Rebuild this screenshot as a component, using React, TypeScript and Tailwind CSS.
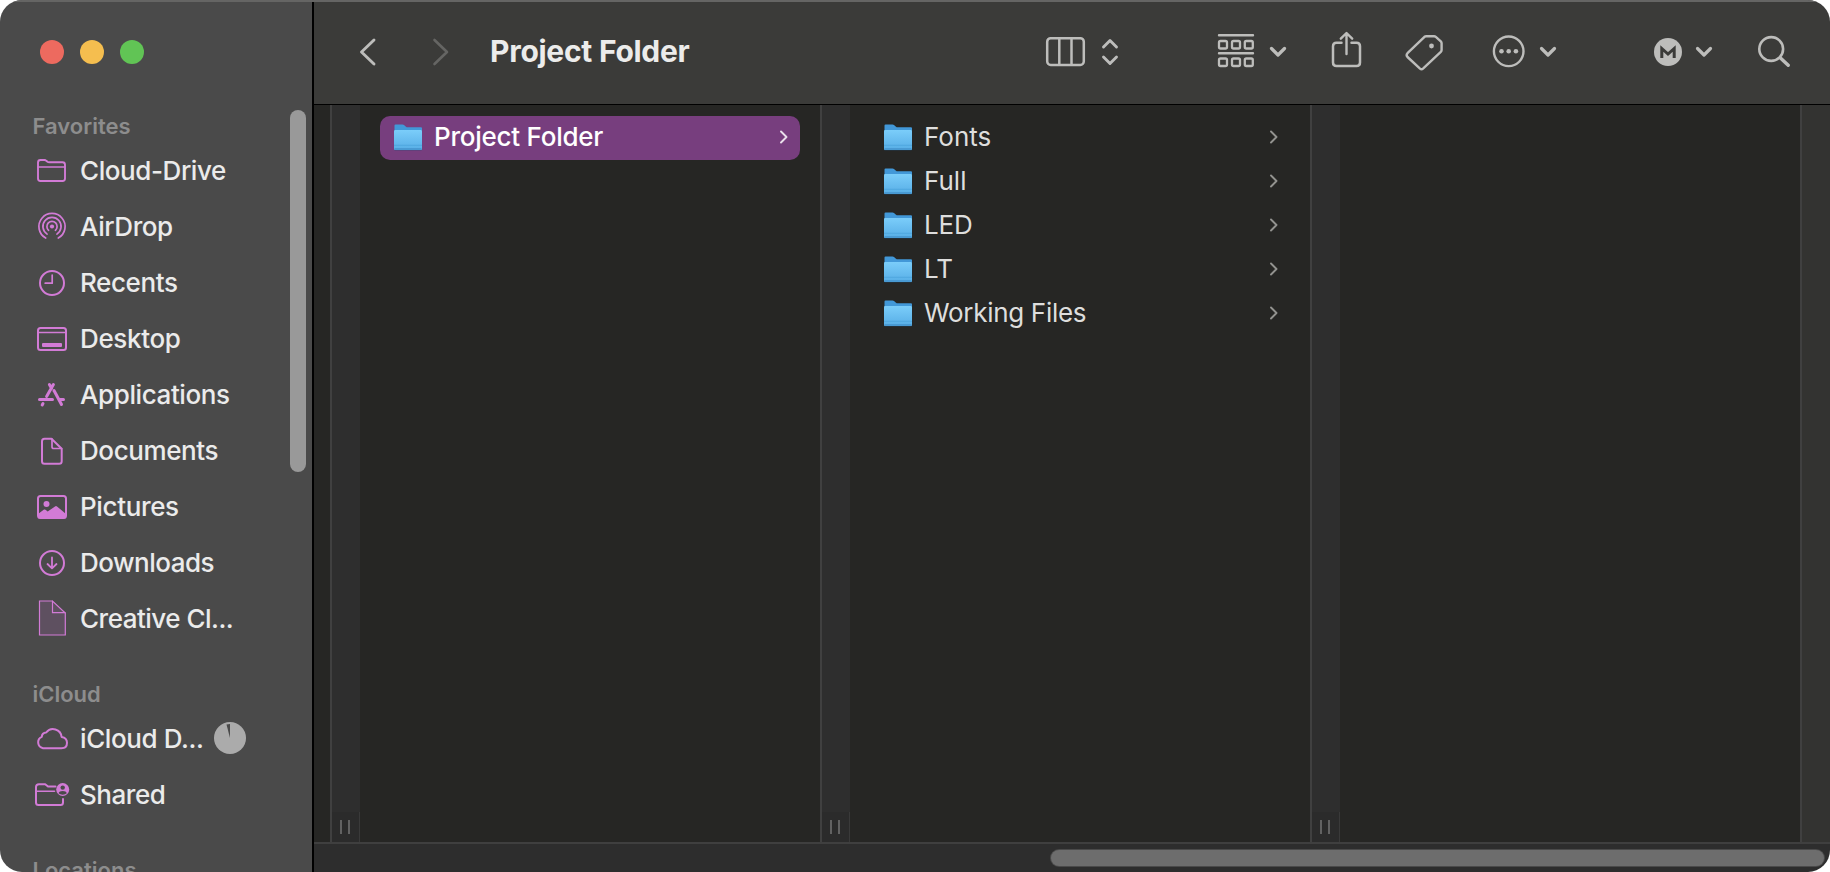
import type { ReactNode } from "react";

type GlyphProps = { box: string; w: number; h: number; className?: string; children: ReactNode };

function Glyph({ box, w, h, className = "", children }: GlyphProps) {
  return (
    <svg
      viewBox={box}
      width={w}
      height={h}
      fill="none"
      stroke="currentColor"
      strokeWidth={2}
      strokeLinecap="round"
      strokeLinejoin="round"
      className={`block shrink-0 ${className}`}
    >
      {children}
    </svg>
  );
}

/* Sidebar glyphs share a 40x40 box centred on (20, 20). */
function SideGlyph({ children }: { children: ReactNode }) {
  return (
    <Glyph box="0 0 40 40" w={40} h={40} className="text-[#d27bd6]">
      {children}
    </Glyph>
  );
}

const glyphs: Record<string, ReactNode> = {
  folder: (
    <>
      <path d="M6 28.5V12.5Q6 10 8.5 10H12.5Q13.5 10 14.3 10.8L15.5 11.8Q16.2 12.3 17.2 12.3H30.5Q33 12.3 33 14.8V28.5Q33 31 30.5 31H8.500Q6 31 6 28.5Z" strokeWidth={1.9} />
      <path d="M6 17H33" strokeWidth={1.6} />
    </>
  ),
  airdrop: (
    <>
      <circle cx="20" cy="20.500" r="2.100" fill="currentColor" stroke="none" />
      <path d="M16.600 24.300A5.100 5.100 0 1 1 23.400 24.300" strokeWidth={1.7} />
      <path d="M15.100 28.100A9.100 9.100 0 1 1 24.900 28.100" strokeWidth={1.7} />
      <path d="M13.700 32.000A13.100 13.100 0 1 1 26.300 32.000" strokeWidth={1.7} />
    </>
  ),
  recents: (
    <>
      <circle cx="20" cy="21" r="12" strokeWidth={2} />
      <path d="M20.200 13V21.200H13.200" strokeWidth={1.7} />
    </>
  ),
  desktop: (
    <>
      <rect x="6" y="10" width="28" height="22" rx="2.500" strokeWidth={2} />
      <path d="M6 14.500H34" strokeWidth={1.500} />
      <rect x="10" y="25" width="20" height="4" rx="1" fill="currentColor" stroke="none" />
    </>
  ),
  applications: (
    <g strokeWidth={3}>
      <path d="M17.400 10.500L19.600 14.500M21.400 10.500L14.600 22.500" />
      <path d="M7.500 25.500H20.500M27.500 25.500H31.500" />
      <path d="M22 16.500L29.500 30.500" />
      <path d="M11 29.500L10.200 31" />
    </g>
  ),
  documents: (
    <>
      <path d="M12.500 8.700H19.500L29.700 18.800V31.300Q29.700 33.800 27.200 33.800H12.500Q10 33.800 10 31.300V11.200Q10 8.700 12.500 8.700Z" strokeWidth={2} />
      <path d="M20 9V16.700Q20 18.500 21.800 18.500H29.500" strokeWidth={1.7} />
    </>
  ),
  pictures: (
    <>
      <rect x="6" y="10" width="28" height="22" rx="2.500" strokeWidth={2} />
      <circle cx="14.500" cy="18" r="3" fill="currentColor" stroke="none" />
      <path d="M6 28L12 23.600Q12.800 23.100 13.500 23.800L15.700 25.600L23 20.400Q24 19.700 25 20.400L34 28V31Q34 32.500 32 32.500H8Q6 32.500 6 31Z" fill="currentColor" stroke="none" />
    </>
  ),
  downloads: (
    <>
      <circle cx="20" cy="21" r="12" strokeWidth={2} />
      <path d="M20 15.500V26M15.500 22L20 26.300L24.500 22" strokeWidth={1.8} />
    </>
  ),
  creative: (
    <g strokeWidth={1.2} strokeLinejoin="miter">
      <path d="M7.500 3H20.500L33.300 15V37H7.500Z" fill="#5e5060" />
      <path d="M20.500 3V14.700H33" />
    </g>
  ),
  cloud: (
    <path
      d="M11 30.200A6 6 0 0 1 9.800 18.800Q10 14.700 14.200 14.500A8.600 8.600 0 0 1 29.600 19Q35 20 35 24.700Q35 30.200 29.500 30.200Z"
      strokeWidth={2}
    />
  ),
  shared: (
    <>
      <path d="M23.500 12.500H16L13.200 10.200H7Q4 10.200 4 13V28.500Q4 31 6.500 31H28.500Q31 31 31 28.500V25" strokeWidth={2} />
      <path d="M4.500 17.300H22.500" strokeWidth={1.6} />
      <circle cx="30.700" cy="15.500" r="6.500" fill="currentColor" stroke="none" />
      <circle cx="30.700" cy="13.600" r="2.200" fill="#4a4a4a" stroke="none" />
      <path d="M26.600 19.300Q27.300 16.900 30.700 16.900T34.800 19.300Q33.200 20.700 30.700 20.700T26.600 19.300Z" fill="#4a4a4a" stroke="none" />
    </>
  ),
};

const favorites = [
  { icon: "folder", label: "Cloud-Drive", tracking: "tracking-[-0.42px]" },
  { icon: "airdrop", label: "AirDrop", tracking: "tracking-[-0.42px]" },
  { icon: "recents", label: "Recents", tracking: "tracking-[-0.4px]" },
  { icon: "desktop", label: "Desktop", tracking: "tracking-[-0.35px]" },
  { icon: "applications", label: "Applications", tracking: "tracking-[-0.4px]" },
  { icon: "documents", label: "Documents", tracking: "tracking-[-0.4px]" },
  { icon: "pictures", label: "Pictures", tracking: "tracking-[-0.35px]" },
  { icon: "downloads", label: "Downloads", tracking: "tracking-[-0.5px]" },
  { icon: "creative", label: "Creative Cl...", tracking: "tracking-[-0.5px]" },
];

const folders = [
  { label: "Fonts", tracking: "tracking-[0px]" },
  { label: "Full", tracking: "tracking-[0px]" },
  { label: "LED", tracking: "tracking-[-0.2px]" },
  { label: "LT", tracking: "tracking-[0px]" },
  { label: "Working Files", tracking: "tracking-[-0.3px]" },
];

function SideItem({ icon, label, tracking, children }: { icon: string; label: string; tracking: string; children?: ReactNode }) {
  return (
    <li className="flex h-14 items-center pl-8">
      <SideGlyph>{glyphs[icon]}</SideGlyph>
      <span className={`ml-2 whitespace-nowrap pt-[2px] text-[26px] leading-none font-medium text-[#ebebeb] ${tracking}`}>{label}</span>
      {children}
    </li>
  );
}

function SideHeading({ children }: { children: ReactNode }) {
  return <h2 className="flex h-8 items-center pl-[32.5px] text-[22px] leading-none font-semibold text-[#8d8d8d]">{children}</h2>;
}

function FolderIcon() {
  return (
    <svg viewBox="0 0 28 28" width="28" height="28" className="block shrink-0">
      <defs>
        <linearGradient id="face" x1="0" y1="0" x2="0" y2="1">
          <stop offset="0" stopColor="#7bcdfa" />
          <stop offset="1" stopColor="#57aee6" />
        </linearGradient>
      </defs>
      <path d="M0.500 4V1.500Q0.500 0.500 1.500 0.500H8.500Q9.500 0.500 10.300 1.200L12 2.700Q12.700 3.200 13.500 3.200H27Q28 3.200 28 4.200V10H0.500Z" fill="#4298d8" />
      <path d="M0 7.200Q0 6 1 6H27Q28 6 28 7.200V25.500Q28 26.500 27 26.500H1Q0 26.500 0 25.500Z" fill="#1d4d75" opacity="0.500" />
      <path d="M0 7.200Q0 6 1 6H27Q28 6 28 7.200V25Q28 26 27 26H1Q0 26 0 25Z" fill="url(#face)" />
      <path d="M0 21.300H28" stroke="#4da3dc" strokeWidth="0.800" />
      <path d="M0.500 25H27.500" stroke="#4291cb" strokeWidth="1.400" />
    </svg>
  );
}

function FolderRow({ label, tracking, selected = false }: { label: string; tracking: string; selected?: boolean }) {
  return (
    <li className={`flex h-11 items-center rounded-[10px] pr-[11px] pl-[14px] ${selected ? "bg-[#773e7e] text-white" : "text-[#dededd]"}`}>
      <FolderIcon />
      <span className={`ml-3 flex-1 whitespace-nowrap pb-[2px] text-[26px] leading-none ${selected ? "font-medium" : "font-normal"} ${tracking}`}>{label}</span>
      <Glyph box="0 0 10 16" w={10} h={16} className={`mb-[2px] ${selected ? "text-[#eadfeb]" : "text-[#92928f]"}`}>
        <path d="M2 2.500L7.500 8L2 13.500" strokeWidth={1.9} />
      </Glyph>
    </li>
  );
}

function Gutter() {
  return (
    <div className="flex w-[30px] shrink-0 flex-col justify-end border-l-2 border-[#404040] bg-[#2e2e2e]">
      <div className="flex h-[30px] gap-[6px] border-r border-[#3a3a3a] bg-[#2b2b2b] pt-2 pl-2">
        <span className="h-[14px] w-[2px] bg-[#626262]" />
        <span className="h-[14px] w-[2px] bg-[#626262]" />
      </div>
    </div>
  );
}

function DownChevron({ className }: { className: string }) {
  return (
    <Glyph box="0 0 18 12" w={18} h={12} className={className}>
      <path d="M2.500 2.500L9 9L15.500 2.500" strokeWidth={3.200} />
    </Glyph>
  );
}

function Toolbar() {
  return (
    <header className="flex h-[104px] shrink-0 items-center bg-[#3b3b39] text-[#bdbdbb]">
      <Glyph box="0 0 18 30" w={18} h={30} className="ml-[45px]">
        <path d="M15 3L2.500 15L15 27" strokeWidth={2.900} />
      </Glyph>
      <Glyph box="0 0 18 30" w={18} h={30} className="ml-[55px] text-[#656563]">
        <path d="M2.500 3L15 15L2.500 27" strokeWidth={2.600} />
      </Glyph>
      <h1 className="ml-10 w-[239px] whitespace-nowrap pb-[2px] text-[30px] leading-none font-bold tracking-[-0.27px] text-[#ececeb]">Project Folder</h1>
      <Glyph box="1044 34 44 36" w={44} h={36} className="ml-[315px]">
        <rect x="1047.200" y="38.200" width="36.600" height="26.800" rx="3.500" strokeWidth={2.500} />
        <path d="M1059.300 38.500V64.500M1071.500 38.500V64.500" strokeWidth={2.500} />
      </Glyph>
      <Glyph box="1100 34 20 36" w={20} h={36} className="ml-[12px]">
        <path d="M1103.500 47L1110 40.500L1116.500 47M1103.500 57L1110 63.500L1116.500 57" strokeWidth={2.900} />
      </Glyph>
      <Glyph box="1216 32 40 40" w={40} h={40} className="ml-[96px]">
        <path d="M1219 35.300H1253M1219 53.200H1253" strokeWidth={2.400} />
        {[1219, 1232, 1244.800].map((x) => (
          <g key={x} strokeWidth={2.300}>
            <rect x={x} y="41" width="8" height="7.500" rx="1.500" />
            <rect x={x} y="58.500" width="8" height="7.500" rx="1.500" />
          </g>
        ))}
      </Glyph>
      <DownChevron className="ml-[13px]" />
      <Glyph box="1330 30 34 44" w={34} h={44} className="ml-[43px]">
        <path d="M1341.500 42.700H1336.500Q1333 42.700 1333 46.200V62.500Q1333 66 1336.500 66H1356.500Q1360 66 1360 62.500V46.200Q1360 42.700 1356.500 42.700H1351.500" strokeWidth={2.500} />
        <path d="M1346.500 54V33.500M1340.800 38.700L1346.500 33L1352.200 38.700" strokeWidth={2.400} />
      </Glyph>
      <Glyph box="1404 32 42 40" w={42} h={40} className="ml-[40px]">
        <path d="M1407.500 53.200L1424.500 36.800Q1425.300 36.200 1426.300 36.200H1434Q1435 36.200 1435.800 36.900L1440.800 41.400Q1441.600 42.200 1441.600 43.200V50Q1441.600 51 1440.800 51.800L1423 68.600Q1421.500 69.900 1420 68.600L1407.500 57Q1405.800 55 1407.500 53.200Z" strokeWidth={2.400} />
        <circle cx="1431.500" cy="46" r="2.400" fill="currentColor" stroke="none" />
      </Glyph>
      <Glyph box="1490 34 36 36" w={36} h={36} className="ml-[44px]">
        <circle cx="1508.700" cy="51.300" r="14.800" strokeWidth={2.400} />
        <g fill="currentColor" stroke="none">
          <circle cx="1501.500" cy="51.300" r="2.300" />
          <circle cx="1508.700" cy="51.300" r="2.300" />
          <circle cx="1515.900" cy="51.300" r="2.300" />
        </g>
      </Glyph>
      <DownChevron className="ml-[13px]" />
      <span className="ml-[97px] flex size-7 items-center justify-center rounded-full bg-[#bdbdbb] text-[#3b3b39]">
        <Glyph box="0 0 28 28" w={28} h={28}>
          <path d="M7.800 20V10.500L14 16L20.200 10.500V20" strokeWidth={3} strokeLinecap="butt" strokeLinejoin="miter" />
        </Glyph>
      </span>
      <DownChevron className="ml-[13px]" />
      <Glyph box="1756 34 36 36" w={36} h={36} className="ml-[43px]">
        <circle cx="1771.200" cy="49" r="11.900" strokeWidth={2.600} />
        <path d="M1780.200 57.800L1788.200 65.300" strokeWidth={3.400} />
      </Glyph>
    </header>
  );
}

export default function App() {
  return (
    <div className="h-[872px] w-[1830px] overflow-hidden bg-white font-['Inter','Liberation_Sans',sans-serif]">
      <div className="relative flex h-full overflow-hidden rounded-[22px]">
        <div className="absolute inset-x-0 top-0 z-10 h-[2px] bg-[#656564]" />
        <aside className="relative h-full w-[312px] shrink-0 overflow-hidden bg-[#4a4a4a]">
          <div className="flex gap-4 pt-10 pl-10">
            <span className="size-6 rounded-full bg-[#ed6a5f]" />
            <span className="size-6 rounded-full bg-[#f5be4f]" />
            <span className="size-6 rounded-full bg-[#61c455]" />
          </div>
          <nav className="pt-[46px]">
            <SideHeading>Favorites</SideHeading>
            <ul>
              {favorites.map((item) => (
                <SideItem key={item.label} {...item} />
              ))}
            </ul>
            <div className="mt-8">
              <SideHeading>iCloud</SideHeading>
            </div>
            <ul>
              <SideItem icon="cloud" label="iCloud D..." tracking="tracking-[-0.4px]">
                <svg viewBox="0 0 32 32" width="32" height="32" className="absolute left-[214px] block">
                  <circle cx="16" cy="16" r="16" fill="#ababab" />
                  <path d="M16 16L12.500 2.600Q14.200 2 16 2Z" fill="#4a4a4a" />
                </svg>
              </SideItem>
              <SideItem icon="shared" label="Shared" tracking="tracking-[-0.45px]" />
            </ul>
            <div className="mt-8">
              <SideHeading>Locations</SideHeading>
            </div>
          </nav>
          <div className="absolute top-[110px] right-[6px] h-[362px] w-4 rounded-full bg-[#999999]" />
        </aside>
        <div className="w-[2px] shrink-0 bg-black" />
        <main className="flex min-w-0 flex-1 flex-col">
          <Toolbar />
          <div className="h-px shrink-0 bg-black" />
          <div className="flex h-[737px] shrink-0 overflow-hidden bg-[#262624] pl-4">
            <Gutter />
            <ul className="w-[460px] shrink-0 px-5 pt-[11px]">
              <FolderRow label="Project Folder" tracking="tracking-[-0.25px]" selected />
            </ul>
            <Gutter />
            <ul className="w-[460px] shrink-0 px-5 pt-[11px]">
              {folders.map((f) => (
                <FolderRow key={f.label} {...f} />
              ))}
            </ul>
            <Gutter />
            <div className="w-[460px] shrink-0" />
            <div className="w-[30px] shrink-0 border-l-2 border-[#404040] bg-[#333331]" />
          </div>
          <footer className="flex flex-1 items-start justify-end border-t-2 border-[#3f3f3f] bg-[#2d2d2d] pt-[6px] pr-[6px]">
            <div className="h-4 w-[773px] rounded-full bg-[#6d6d6d] shadow-[0_0_0_1px_#4a4a4a]" />
          </footer>
        </main>
      </div>
    </div>
  );
}
